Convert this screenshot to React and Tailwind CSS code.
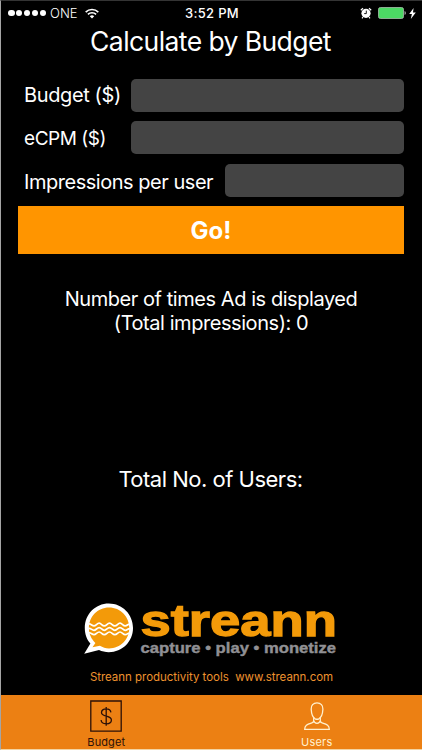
import { useState } from 'react';

const fields = [
  { id: 'budget', label: 'Budget ($)', labelClass: 'w-[107px]', textClass: 'text-[20px] tracking-[-0.38px]' },
  { id: 'ecpm', label: 'eCPM ($)', labelClass: 'w-[107px] pt-[2px]', textClass: 'text-[19px] tracking-[-0.45px]' },
  { id: 'impressions', label: 'Impressions per user', labelClass: 'w-[201px] pt-[3px]', textClass: 'text-[20px] tracking-[-0.47px]' },
];

function StatusBar() {
  return (
    <div className="grid h-[24px] shrink-0 grid-cols-[1fr_auto_1fr] items-center pl-[7px] pr-[6px] text-[13px] leading-none">
      <div className="flex items-center">
        <div className="flex gap-[1.4px]">
          {[0, 1, 2, 3, 4].map((dot) => (
            <span key={dot} className="size-[6.5px] rounded-full bg-white" />
          ))}
        </div>
        <span className="ml-[4px] font-light">ONE</span>
        <svg className="ml-[7px] h-[11px] w-[14px]" viewBox="0 0 14 11" fill="none" stroke="#fff" strokeWidth="1.6">
          <path d="M.7 4.1a9 9 0 0 1 12.6 0M2.9 6.4a5.9 5.9 0 0 1 8.2 0" />
          <path d="M7 10.5 4.8 8.2a3.2 3.2 0 0 1 4.4 0z" fill="#fff" stroke="none" />
        </svg>
      </div>
      <span className="text-[13px] font-medium tracking-[0.3px]">3:52 PM</span>
      <div className="flex items-center justify-end">
        <svg className="h-[12px] w-[12px]" viewBox="0 0 12 12">
          <circle cx="6" cy="6.3" r="4.6" fill="#fff" />
          <path d="M.8 3.2 3 1.2M11.2 3.2 9 1.2M3 10l-1 1.3M9 10l1 1.3" stroke="#fff" strokeWidth="1.2" />
          <path d="M6.3 3.6v3H4.2" fill="none" stroke="#000" strokeWidth=".9" />
        </svg>
        <svg className="ml-[6px] h-[12px] w-[28px]" viewBox="0 0 28 12">
          <rect x=".5" y=".5" width="25" height="11" rx="1.8" fill="#4cd964" stroke="#b9c9bb" strokeWidth=".7" />
          <path d="M26.7 4c1.2.4 1.2 3.6 0 4z" fill="#fff" />
        </svg>
        <svg className="ml-[3px] h-[11px] w-[7px]" viewBox="0 0 7 11">
          <path d="M4.6 0 .2 6h2.7L1.8 11l5-6.4H4z" fill="#fff" />
        </svg>
      </div>
    </div>
  );
}

function Logo() {
  return (
    <svg className="block h-[60px] w-[256px] overflow-visible" viewBox="0 0 256 60" role="img" aria-label="streann">
      <path
        d="M24.8 2.6C11.3 2.6.8 13.4.8 27c0 6.3 2.2 11.8 5.6 15.6L.2 52.7 15 49c3 1.4 6.3 2.2 9.8 2.2C38.4 51.2 49 40.5 49 27S38.4 2.6 24.8 2.6z"
        fill="#fff"
      />
      <path
        d="M25 6.5C13.500 6.500 4.900 15.800 4.900 27c0 6.100 2.500 11.200 6.500 14.900l-2.900 4.400 7.400-1.500c2.700 1.600 5.800 2.600 9.100 2.600 11.500 0 20.300-9.100 20.300-20.400S36.500 6.500 25 6.500z"
        fill="#f39a09"
      />
      <g fill="none" stroke="#fff" strokeWidth="1.7">
        <path id="wave" d="M4.6 23C7 22.600 8 24.900 10 24.900S13 22.200 15.200 22.200S18 24.900 20.300 24.900S23.200 22.200 25.500 22.200S28.500 24.900 30.800 24.900S33.800 22.200 36 22.200S39 24.900 41.200 24.900S43.500 23 46 23.200" />
        <use href="#wave" y="4.4" />
        <use href="#wave" y="8.8" />
      </g>
      <text x="56.5" y="34.6" textLength="196.5" lengthAdjust="spacingAndGlyphs" fill="#f39a09" stroke="#f39a09" strokeWidth="1.3" className="font-['Liberation_Sans',sans-serif] text-[45px] font-bold">
        streann
      </text>
      <text x="56.5" y="52" textLength="195.5" lengthAdjust="spacingAndGlyphs" fill="#909094" stroke="#909094" strokeWidth=".4" className="font-['Liberation_Sans',sans-serif] text-[15px] font-bold">
        capture • play • monetize
      </text>
    </svg>
  );
}

function TabBar() {
  return (
    <nav className="grid h-[54px] shrink-0 grid-cols-2 bg-[#ec8013] text-[11px] leading-[13px]">
      <button type="button" className="flex flex-col items-center pt-[5px] text-[#2b1008]">
        <svg className="h-[32px] w-[32px]" viewBox="0 0 32 32" fill="none" stroke="currentColor" strokeWidth="1.3">
          <path d="M.8 1h30.4v30.2H.8z" />
          <path d="M20.9 12.4c-.3-2.2-2.1-3.5-4.7-3.5-2.8 0-4.7 1.4-4.7 3.5 0 4.9 9.9 2.6 9.9 7.6 0 2.3-2 3.8-5.1 3.8-3 0-5-1.4-5.2-3.8M16.2 7v18.8" />
        </svg>
        <span className="mt-[4px] tracking-[0.1px]">Budget</span>
      </button>
      <button type="button" className="flex flex-col items-center pt-[7px] text-[#fff0cf]">
        <svg className="h-[28px] w-[26px]" viewBox="0 0 26 28" fill="none" stroke="currentColor" strokeWidth="1.3">
          <path d="M13 .9C9.2.9 6.9 3.5 7.2 7.2c.2 3.7 1.4 8.2 4 9.6 1.2.6 2.4.6 3.6 0 2.6-1.4 3.9-5.9 4.100-9.600C19.100 3.500 16.800.9 13 .9z" />
          <path d="M9.700 15.500v3.300c0 1.500-.9 2-2.400 2.400-4.300 1.200-6.600 2.200-6.600 6.100h24.600c0-3.900-2.300-4.900-6.600-6.100-1.500-.4-2.400-.9-2.400-2.400v-3.300M9.700 18.700c.8 3.500 5.800 3.500 6.600 0" />
        </svg>
        <span className="mt-[6px] tracking-[0.2px]">Users</span>
      </button>
    </nav>
  );
}

export default function App() {
  const [values, setValues] = useState({ budget: '', ecpm: '', impressions: '' });

  return (
    <div className="flex h-[750px] w-[422px] flex-col overflow-hidden border-t border-b border-l border-t-[#343434] border-b-[#f3d4a2] border-l-[#a5a5a5] bg-black font-[Inter,'Liberation_Sans',sans-serif] text-white">
      <StatusBar />
      <h1 className="h-[53.7px] shrink-0 pr-[2px] text-center text-[26.5px] leading-[32px] tracking-[-0.57px]">Calculate by Budget</h1>

      <form className="flex flex-col gap-[9.6px] pl-[17px] pr-[18px]" onSubmit={(event) => event.preventDefault()}>
        {fields.map((field) => (
          <div key={field.id} className="flex h-[33px] items-center pl-[6px]">
            <label htmlFor={field.id} className={`shrink-0 whitespace-nowrap ${field.labelClass} ${field.textClass}`}>
              {field.label}
            </label>
            <input
              id={field.id}
              value={values[field.id]}
              onChange={(event) => setValues({ ...values, [field.id]: event.target.value })}
              className="h-full min-w-0 flex-1 rounded-[5px] bg-[#444] px-2 outline-none"
            />
          </div>
        ))}
        <button type="submit" className="h-[47.4px] bg-[#ff9500] pt-[2px] text-[24px] font-bold">
          Go!
        </button>
      </form>

      <p className="mt-[33px] pr-[1px] text-center text-[20px] leading-[24px] tracking-[-0.44px]">
        Number of times Ad is displayed
        <br />
        (Total impressions): 0
      </p>
      <p className="mt-[130px] pr-[2px] text-center text-[22px] leading-[28px] tracking-[-0.5px]">Total No. of Users:</p>

      <div className="mt-auto flex flex-col items-center">
        <Logo />
        <p className="mt-[8px] mb-[10px] text-[11.5px] leading-[16px] tracking-[-0.03px] whitespace-pre text-[#ee922f]">
          {'Streann productivity tools  www.streann.com'}
        </p>
      </div>
      <TabBar />
    </div>
  );
}
